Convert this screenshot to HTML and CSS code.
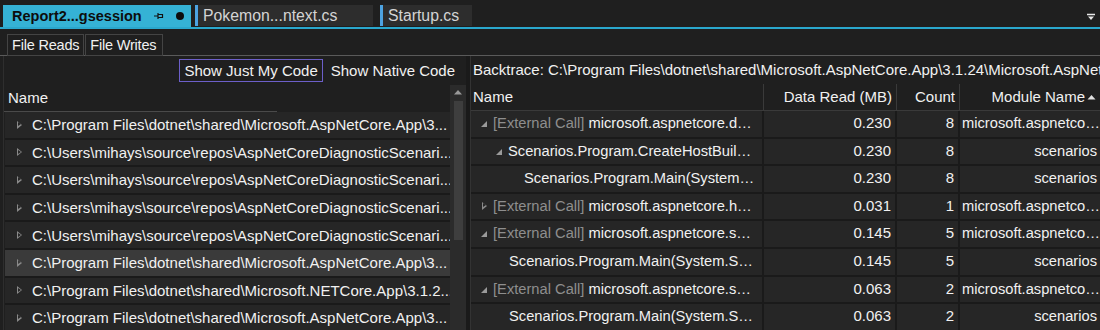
FILE: index.html
```html
<!DOCTYPE html>
<html>
<head>
<meta charset="utf-8">
<link rel="stylesheet" href="styles.css">
</head>
<body>
<div class="tabstrip">
  <div class="tab active">
    <span class="tab-label">Report2...gsession</span>
    <svg class="pin" width="10" height="8" viewBox="0 0 10 8"><path d="M0 4H4M4 1V7M4 2.5H8.5V5.5H4" fill="none" stroke="#111" stroke-width="1.2"/></svg>
    <span class="dot"></span>
  </div>
  <div class="tab doc first">Pokemon...ntext.cs</div>
  <div class="tab doc second">Startup.cs</div>
  <div class="spacer"></div>
  <svg class="drop" width="10" height="8" viewBox="0 0 10 8"><path d="M1 1.5H9" stroke="#e8e8e8" stroke-width="1.5"/><path d="M2 3.5H8L5 7Z" fill="#e8e8e8"/></svg>
</div>
<div class="subtabs">
  <div class="subtab">File Reads</div>
  <div class="subtab">File Writes</div>
</div>
<div class="main">
  <div class="left">
    <div class="toolbar">
      <div class="tbtn focused">Show Just My Code</div>
      <div class="tbtn">Show Native Code</div>
    </div>
    <div class="tree-wrap">
      <div class="tree">
        <div class="tree-head"><span>Name</span></div>
        <div class="trow"><span class="exp"></span><span class="ttext">C:\Program Files\dotnet\shared\Microsoft.AspNetCore.App\3...</span></div>
        <div class="trow"><span class="exp"></span><span class="ttext">C:\Users\mihays\source\repos\AspNetCoreDiagnosticScenari...</span></div>
        <div class="trow"><span class="exp"></span><span class="ttext">C:\Users\mihays\source\repos\AspNetCoreDiagnosticScenari...</span></div>
        <div class="trow"><span class="exp"></span><span class="ttext">C:\Users\mihays\source\repos\AspNetCoreDiagnosticScenari...</span></div>
        <div class="trow"><span class="exp"></span><span class="ttext">C:\Users\mihays\source\repos\AspNetCoreDiagnosticScenari...</span></div>
        <div class="trow sel"><span class="exp"></span><span class="ttext">C:\Program Files\dotnet\shared\Microsoft.AspNetCore.App\3...</span></div>
        <div class="trow"><span class="exp"></span><span class="ttext">C:\Program Files\dotnet\shared\Microsoft.NETCore.App\3.1.2...</span></div>
        <div class="trow"><span class="exp"></span><span class="ttext">C:\Program Files\dotnet\shared\Microsoft.AspNetCore.App\3...</span></div>
      </div>
      <div class="vscroll">
        <svg class="up" width="10" height="6" viewBox="0 0 10 6"><path d="M1 5.5H9L5 1Z" fill="#9a9a9a"/></svg>
        <div class="thumb"></div>
      </div>
    </div>
  </div>
  <div class="split"></div>
  <div class="right">
    <div class="backtrace">Backtrace: C:\Program Files\dotnet\shared\Microsoft.AspNetCore.App\3.1.24\Microsoft.AspNetCore.dll</div>
    <div class="grid head">
      <div class="c name">Name</div>
      <div class="c num">Data Read (MB)</div>
      <div class="c cnt">Count</div>
      <div class="c mod">Module Name<svg class="sort" width="9" height="6" viewBox="0 0 9 6"><path d="M0.5 5.5H8.5L4.5 1Z" fill="#e0e0e0"/></svg></div>
    </div>
    <div class="grid row">
      <div class="c name l1"><span class="open"></span><span class="ext">[External Call]</span> microsoft.aspnetcore.d…</div>
      <div class="c num">0.230</div><div class="c cnt">8</div><div class="c mod">microsoft.aspnetco…</div>
    </div>
    <div class="grid row">
      <div class="c name l2"><span class="open"></span>Scenarios.Program.CreateHostBuil…</div>
      <div class="c num">0.230</div><div class="c cnt">8</div><div class="c mod">scenarios</div>
    </div>
    <div class="grid row">
      <div class="c name l3">Scenarios.Program.Main(System…</div>
      <div class="c num">0.230</div><div class="c cnt">8</div><div class="c mod">scenarios</div>
    </div>
    <div class="grid row">
      <div class="c name l1"><span class="closed"></span><span class="ext">[External Call]</span> microsoft.aspnetcore.h…</div>
      <div class="c num">0.031</div><div class="c cnt">1</div><div class="c mod">microsoft.aspnetco…</div>
    </div>
    <div class="grid row">
      <div class="c name l1"><span class="open"></span><span class="ext">[External Call]</span> microsoft.aspnetcore.s…</div>
      <div class="c num">0.145</div><div class="c cnt">5</div><div class="c mod">microsoft.aspnetco…</div>
    </div>
    <div class="grid row">
      <div class="c name l2b">Scenarios.Program.Main(System.S…</div>
      <div class="c num">0.145</div><div class="c cnt">5</div><div class="c mod">scenarios</div>
    </div>
    <div class="grid row">
      <div class="c name l1"><span class="open"></span><span class="ext">[External Call]</span> microsoft.aspnetcore.s…</div>
      <div class="c num">0.063</div><div class="c cnt">2</div><div class="c mod">microsoft.aspnetco…</div>
    </div>
    <div class="grid row">
      <div class="c name l2b">Scenarios.Program.Main(System.S…</div>
      <div class="c num">0.063</div><div class="c cnt">2</div><div class="c mod">scenarios</div>
    </div>
  </div>
</div>
</body>
</html>
```
FILE: styles.css
```css
* { box-sizing: border-box; }
html, body { margin: 0; padding: 0; }
body {
  width: 1100px;
  height: 330px;
  overflow: hidden;
  background: #1f1f1f;
  color: #f1f1f1;
  font-family: "Liberation Sans", Arial, sans-serif;
  font-size: 15px;
}

/* document tab strip */
.tabstrip {
  display: flex;
  align-items: flex-end;
  height: 29px;
  padding: 5px 0 0 3px;
  border-bottom: 2px solid #2aa7cd;
}
.tab {
  height: 21px;
  display: flex;
  align-items: center;
  white-space: nowrap;
  align-self: flex-start;
}
.tab.active {
  width: 188px;
  height: 22px;
  background: #35b2d5;
  color: #0d0d0d;
  font-weight: bold;
  padding-left: 9px;
}
.tab-label { font-size: 14.5px; }
.pin { margin-left: 12px; }
.dot {
  width: 8px; height: 8px; border-radius: 50%;
  background: #0d0d0d;
  margin-left: 12px;
}
.tab.doc {
  background: #2d2d2d;
  color: #d4d4d4;
  border-left: 3px solid #4da3e2;
  padding-left: 5px;
  font-size: 15.8px;
}
.tab.first { margin-left: 4px; width: 178px; }
.tab.second { margin-left: 7px; width: 92px; }
.spacer { flex: 1; }
.drop { align-self: center; margin-right: 4px; margin-top: 2px; }

/* sub tabs */
.subtabs {
  display: flex;
  height: 27px;
  padding: 5px 0 0 7px;
  border-bottom: 1px solid #5a5a5a;
}
.subtab {
  height: 22px;
  border: 1px solid #444;
  padding: 0 4px;
  line-height: 20px;
  color: #f1f1f1;
  font-size: 14.5px;
  letter-spacing: -0.2px;
}
.subtab + .subtab { margin-left: 1px; padding-right: 6px; }

/* main */
.main {
  display: flex;
  height: 274px;
}
.left {
  width: 463px;
  margin-left: 3px;
  border-left: 1px solid #2e2e2e;
  display: flex;
  flex-direction: column;
}
.toolbar {
  height: 29px;
  display: flex;
  justify-content: flex-end;
  align-items: center;
  padding-right: 6px;
  gap: 3px;
}
.tbtn {
  height: 23px;
  line-height: 21px;
  padding: 0 4px;
  border: 1px solid transparent;
  white-space: nowrap;
}
.tbtn.focused { border-color: #6c5fc9; }
.tree-wrap {
  flex: 1;
  display: flex;
  min-height: 0;
}
.tree {
  flex: 1;
  overflow: hidden;
  min-width: 0;
}
.tree-head {
  height: 27px;
  line-height: 26px;
  padding-left: 4px;
  position: relative;
}
.tree-head::after {
  content: "";
  position: absolute;
  left: -4px; bottom: 0;
  width: 277px; height: 1px;
  background: #4a4a4a;
}
.trow {
  height: 27.6px;
  background: #262626;
  border-bottom: 2px solid #1a1a1a;
  margin-left: 1px;
  display: flex;
  align-items: center;
  white-space: nowrap;
  overflow: hidden;
}
.trow.sel { background: #3a3a3a; }
.exp {
  flex: none;
  width: 0; height: 0;
  margin-left: 12px;
  margin-right: 10px;
  border-left: 5px solid #8a8a8a;
  border-top: 4px solid transparent;
  border-bottom: 4px solid transparent;
  position: relative;
}
.exp::after {
  content: "";
  position: absolute;
  left: -4px; top: -2.5px;
  border-left: 3px solid #262626;
  border-top: 2.5px solid transparent;
  border-bottom: 2.5px solid transparent;
}
.trow.sel .exp::after { border-left-color: #3a3a3a; }
.ttext { overflow: hidden; }

.vscroll {
  width: 16px;
  flex: none;
  background: #2b2b2b;
  display: flex;
  flex-direction: column;
  align-items: center;
  padding-top: 4px;
}
.up { margin-bottom: 6px; }
.thumb {
  width: 9px;
  height: 139px;
  background: #3e3e3e;
}

.split {
  width: 4px;
  flex: none;
  background: #1a1a1a;
}
.right {
  flex: 1;
  min-width: 0;
  border-left: 1px solid #333;
  overflow: hidden;
}
.backtrace {
  height: 28px;
  line-height: 28px;
  padding-left: 2px;
  white-space: nowrap;
  overflow: hidden;
}
.grid {
  display: grid;
  grid-template-columns: 293px 133px 63px 1fr;
}
.grid.head {
  height: 27px;
  border-bottom: 1px solid #3a3a3a;
}
.grid.head .c {
  line-height: 25px;
  border-right: 1px solid #3a3a3a;
}
.grid.head .c:last-child { border-right: none; }
.c {
  white-space: nowrap;
  overflow: hidden;
  padding: 0 4px;
}
.c.name { padding-left: 2px; }
.c.num, .c.cnt, .c.mod { text-align: right; }
.c.mod { padding-right: 3px; }
.grid.head .c.mod { padding-right: 4px; }
.sort { margin-left: 2px; vertical-align: 2px; }

.grid.row {
  height: 27.6px;
  border-bottom: 2px solid #1a1a1a;
}
.grid.row .c {
  background: #262626;
  line-height: 24px;
  border-right: 2px solid #1a1a1a;
}
.grid.row .c.name { font-size: 14.7px; }
.grid.row .c:last-child { border-right: none; }
.grid.row .c.mod { padding-left: 2px; font-size: 14.7px; }
.ext { color: #8e8e8e; }
.l1 { padding-left: 10px !important; }
.l2 { padding-left: 25px !important; }
.l2b { padding-left: 38px !important; }
.l3 { padding-left: 53px !important; }
.open, .closed {
  display: inline-block;
  width: 0; height: 0;
  vertical-align: 1px;
  margin-right: 6px;
}
.open {
  border-right: 6px solid #9a9a9a;
  border-top: 6px solid transparent;
}
.closed {
  border-left: 5px solid #8a8a8a;
  border-top: 4px solid transparent;
  border-bottom: 4px solid transparent;
  position: relative;
  margin-left: 1px;
}
.closed::after {
  content: "";
  position: absolute;
  left: -4px; top: -2.5px;
  border-left: 3px solid #262626;
  border-top: 2.5px solid transparent;
  border-bottom: 2.5px solid transparent;
}
```
